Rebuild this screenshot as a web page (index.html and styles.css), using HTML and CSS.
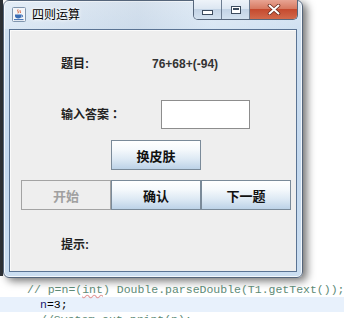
FILE: index.html
```html
<html>
<head>
<link rel="stylesheet" href="styles.css">
</head>
<body>
<div class="screen">
  <div class="top">
    <div class="editor-edge"></div>
    <div class="window">
      <div class="titlebar">
        <svg class="app-icon" width="14" height="15" viewBox="0 0 14 15">
          <rect x="0.5" y="0.5" width="13" height="14" rx="1" fill="#f3f5f8" stroke="#8196ae"/>
          <path d="M6 2.5c-1.2 1.4 1.2 2 0 3.8M8.2 3.2c-.9 1 .9 1.5 0 2.8" stroke="#d4542c" fill="none"/>
          <path d="M3 7.5h6.5v1.6c0 1.6-1.2 2.4-3.2 2.4S3 10.7 3 9.1z" fill="#3c6db3"/>
          <path d="M9.5 8c1.6 0 1.6 2.2 0 2.2" stroke="#3c6db3" fill="none"/>
          <path d="M2 12.6h9.5" stroke="#3c6db3"/>
        </svg>
        <span class="title">四则运算</span>
        <div class="caption-buttons">
          <div class="cap cap-min"><span class="glyph-min"></span></div>
          <div class="cap cap-max"><span class="glyph-max"></span></div>
          <div class="cap cap-close">
            <svg width="14" height="11" viewBox="0 0 14 11">
              <path d="M2.5 1.5l9 8M11.5 1.5l-9 8" stroke="#6b2a1e" stroke-width="3.6" stroke-linecap="round"/>
              <path d="M2.5 1.5l9 8M11.5 1.5l-9 8" stroke="#ffffff" stroke-width="2" stroke-linecap="round"/>
            </svg>
          </div>
        </div>
      </div>
      <div class="client">
        <div class="row row-question">
          <span class="label">题目:</span>
          <span class="value">76+68+(-94)</span>
        </div>
        <div class="row row-answer">
          <span class="label label-wide">输入答案<span class="fw-colon">：</span></span>
          <div class="textbox"></div>
        </div>
        <div class="row row-skin">
          <div class="btn">换皮肤</div>
        </div>
        <div class="row row-actions">
          <div class="btn btn-disabled">开始</div>
          <div class="btn">确认</div>
          <div class="btn">下一题</div>
        </div>
        <div class="row row-hint">
          <span class="label">提示:</span>
        </div>
      </div>
    </div>
  </div>
  <div class="code">
    <div class="line line-1"><span class="comment">// p=n=(<span class="squiggle">int</span>) Double.parseDouble(T1.getText());</span></div>
    <div class="line line-2 current"><span class="ident">n</span>=3;</div>
    <div class="line line-3"><span class="comment">//System.out.print(n);</span></div>
  </div>
</div>
</body>
</html>
```

FILE: styles.css
```css
body {
  margin: 0;
  background-color: #fff;
  font-family: "Liberation Sans", "Noto Sans CJK SC", sans-serif;
  overflow: hidden;
}

.screen {
  width: 344px;
  height: 318px;
  overflow: hidden;
}

.top {
  display: flex;
  height: 278px;
}

.editor-edge {
  width: 3px;
  height: 276px;
  background-color: #2f3338;
}

/* aero window frame */
.window {
  width: 300px;
  height: 278px;
  box-sizing: border-box;
  display: flex;
  flex-direction: column;
  padding: 0 5px 5px;
  border: 1px solid #55657a;
  border-radius: 6px;
  background: linear-gradient(to bottom, #dce8f4 0%, #cddff1 12%, #c3d8ee 60%, #cbdef1 100%);
  box-shadow: inset 0 0 0 1px rgba(255, 255, 255, 0.75), 4px 3px 9px rgba(0, 0, 0, 0.55);
}

.titlebar {
  display: flex;
  align-items: flex-start;
  height: 28px;
  background: linear-gradient(to right, rgba(255,255,255,0.25), rgba(200,210,222,0.35) 45%, rgba(255,255,255,0.2) 70%, rgba(255,255,255,0));
  margin: 0 -5px;
  padding: 0 5px;
}

.app-icon {
  margin: 6px 0 0 3px;
  flex: none;
}

.title {
  margin: 5px 0 0 6px;
  font-family: "Noto Sans CJK SC", sans-serif;
  font-size: 12px;
  line-height: 16px;
  color: #000;
  text-shadow: 0 0 5px #fff, 0 0 3px #fff;
}

.caption-buttons {
  display: flex;
  margin: -1px -1px 0 auto;
  height: 19px;
  border: 1px solid #57677c;
  border-top: none;
  border-radius: 0 0 5px 5px;
  overflow: hidden;
}

.cap {
  display: flex;
  align-items: center;
  justify-content: center;
  height: 19px;
  background: linear-gradient(to bottom, #eef3f9 0%, #dde7f2 45%, #c3d3e5 50%, #d3e1ef 100%);
}

.cap-min {
  width: 27px;
  border-right: 1px solid #6d7d91;
}

.cap-max {
  width: 27px;
  border-right: 1px solid #6d7d91;
}

.cap-close {
  width: 47px;
  background: linear-gradient(to bottom, #e8a493 0%, #d77a62 45%, #c54a2f 50%, #d26a4c 100%);
}

.glyph-min {
  width: 9px;
  height: 3px;
  margin-top: 6px;
  background-color: #fff;
  border: 1px solid #3d4c5e;
}

.glyph-max {
  width: 8px;
  height: 6px;
  background-color: #fff;
  border: 1px solid #3d4c5e;
  box-shadow: inset 0 0 0 1px #fff, inset 0 2px 0 1px #3d4c5e;
}

/* client area */
.client {
  flex: 1;
  border: 1px solid #5a7393;
  background-color: #eeeeee;
  box-shadow: inset 1px 1px 0 #fafafa;
}

.row {
  display: flex;
  align-items: center;
}

.label, .value {
  font-size: 12px;
  font-weight: bold;
  line-height: 14px;
  color: #222;
}

.label {
  width: 91px;
  margin-left: 51px;
}

.label-wide {
  width: 100px;
}

.fw-colon {
  font-family: "Noto Sans CJK TC", sans-serif;
}

.row-question {
  margin-top: 27px;
}

.value {
  color: #333;
}

.row-answer {
  margin-top: 29px;
  height: 29px;
}

.textbox {
  width: 87px;
  height: 27px;
  background-color: #fff;
  border: 1px solid #8d8d8d;
}

.btn {
  box-sizing: border-box;
  display: flex;
  align-items: center;
  justify-content: center;
  width: 90px;
  height: 30px;
  border: 1px solid #7a8a99;
  background: linear-gradient(to bottom, #ffffff 0%, #f5f9fc 30%, #dde9f4 65%, #bcd2e7 100%);
  font-size: 13px;
  font-weight: bold;
  color: #111;
}

.row-skin {
  margin-top: 11px;
  padding-left: 101px;
}

.row-actions {
  margin-top: 10px;
  padding-left: 11px;
}

.btn-disabled {
  background: #eeeeee;
  border-color: #a3a3a3;
  color: #a0a0a0;
}

.row-hint {
  margin-top: 28px;
}

/* editor behind */
.code {
  padding-top: 4px;
  font-family: "Liberation Mono", monospace;
  font-size: 11.5px;
  line-height: 15px;
}

.line {
  white-space: pre;
}

.line-1 {
  padding-left: 27px;
}

.line-2, .line-3 {
  padding-left: 40px;
}

.current {
  background-color: #e8f1fc;
}

.comment {
  color: #5d8a76;
}

.squiggle {
  text-decoration: underline wavy #e39b9b;
}

.ident {
  color: #1d1d72;
}
```
